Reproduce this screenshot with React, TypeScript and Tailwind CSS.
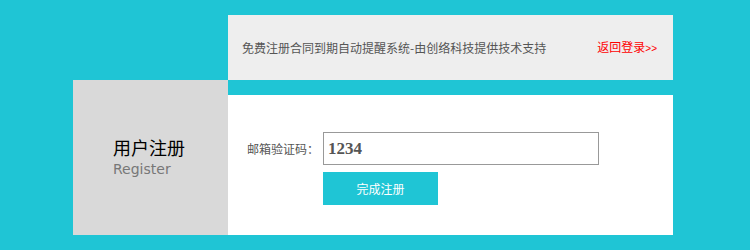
export default function App() {
  return (
    <div className="w-[750px] h-[250px] bg-[#1fc5d5] pt-[15px] font-['Noto_Sans_CJK_SC',sans-serif]">
      <div className="ml-[73px] w-[600px]">
        {/* Top bar */}
        <div className="flex">
          <div className="w-[155px]" />
          <div className="w-[445px] h-[65px] bg-[#eeeeee] flex items-center justify-between pl-[14px] pr-[16px]">
            <span className="text-[12px] text-[#555] leading-none">
              免费注册合同到期自动提醒系统-由创络科技提供技术支持
            </span>
            <a href="#" className="text-[12px] text-[#ff0000] leading-none">
              返回登录<span className="text-[10px] font-['Liberation_Sans',sans-serif]">&gt;&gt;</span>
            </a>
          </div>
        </div>

        <div className="flex">
          {/* Left title panel */}
          <div className="w-[155px] h-[155px] bg-[#d9d9d9] flex flex-col justify-center pl-[40px]">
            <div className="text-[18px] leading-[20px] text-black">用户注册</div>
            <div className="mt-[2px] text-[14px] leading-[20px] text-[#777] font-['DejaVu_Sans',sans-serif]">Register</div>
          </div>

          {/* Form panel */}
          <div className="w-[445px] mt-[15px] h-[140px] bg-white pt-[37px]">
            <div className="flex items-center">
              <label className="w-[95px] pl-[19px] text-[12px] text-[#555] leading-none">邮箱验证码：</label>
              <input
                type="text"
                defaultValue="1234"
                className="w-[276px] h-[33px] border border-[#999] px-[4px] outline-none text-[17px] font-bold text-[#555] font-['Liberation_Serif',serif]"
              />
            </div>
            <button className="mt-[7px] ml-[95px] w-[115px] h-[33px] bg-[#1fc5d5] text-white text-[12px] leading-none">
              完成注册
            </button>
          </div>
        </div>
      </div>
    </div>
  );
}
